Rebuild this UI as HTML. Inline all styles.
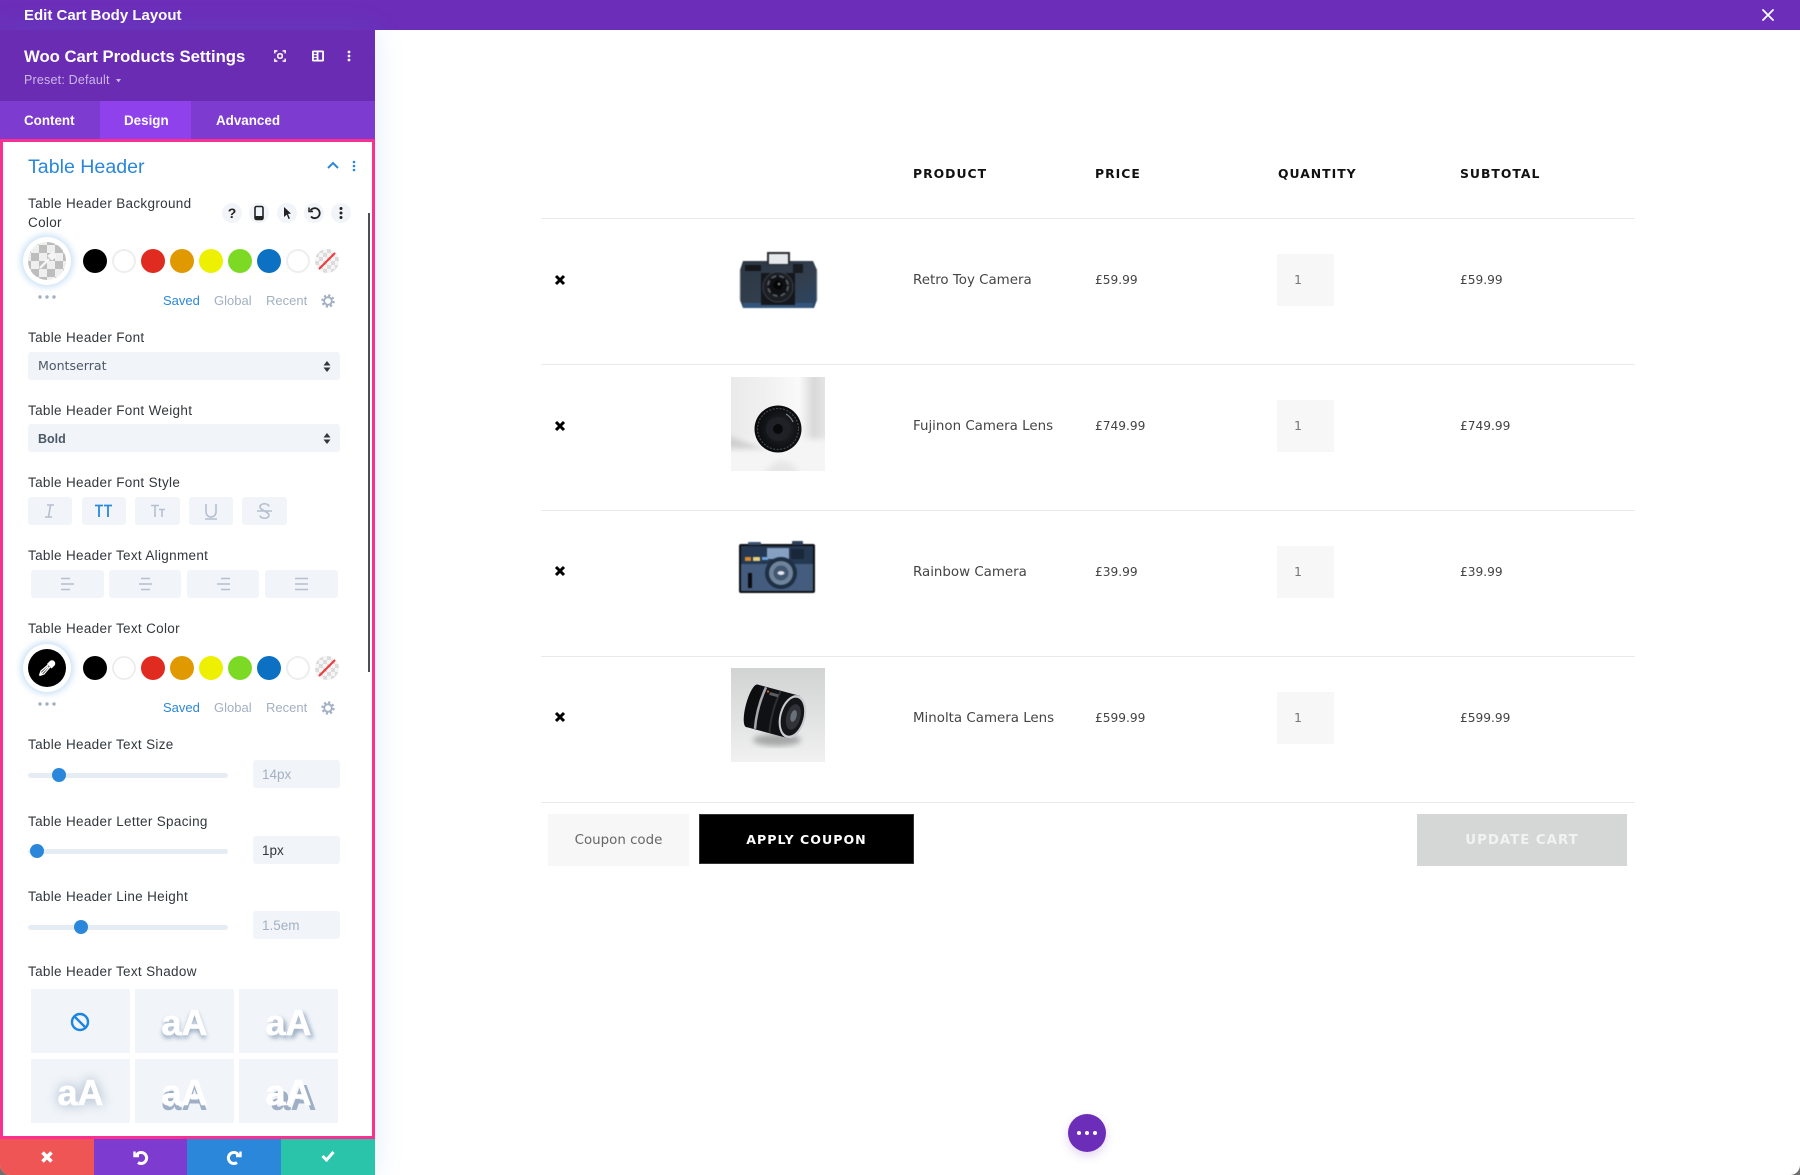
<!DOCTYPE html>
<html lang="en"><head><meta charset="utf-8"><title>Edit Cart Body Layout</title>
<style>
*{box-sizing:border-box;margin:0;padding:0}
html,body{width:1800px;height:1175px;overflow:hidden;background:#fff}
body{position:relative;font-family:"Liberation Sans",sans-serif;color:#32373c}
.a{position:absolute}
.t{position:absolute;white-space:nowrap;line-height:20px;height:20px}
.l{position:absolute;left:28px;white-space:nowrap;line-height:18px;height:18px;font-size:13.5px;letter-spacing:.32px;color:#32373c}
.box{position:absolute;background:#f1f5f9;border-radius:3px}
.sw{position:absolute;width:24px;height:24px;border-radius:50%}
.m{font-family:"DejaVu Sans",sans-serif}
.tab{position:absolute;top:111px;line-height:20px;font-size:13.4px;font-weight:700;color:#fff}
.c{position:absolute;width:20px;height:20px;border-radius:50%;background:#f1f5f9;top:203px}
.c svg{position:absolute;left:0;top:0}
.ln{position:absolute;left:541px;width:1094px;height:1px;background:#e9e9e9}
.h{position:absolute;top:164px;font-family:"DejaVu Sans",sans-serif;font-weight:700;font-size:12.4px;letter-spacing:1px;line-height:20px;color:#111}
.r{position:absolute;font-family:"DejaVu Sans",sans-serif;font-size:13.4px;line-height:20px;color:#444;white-space:nowrap}
.p{font-size:12.2px}
.q{position:absolute;left:1277px;width:57px;height:52px;background:#f7f7f7;color:#777;font-family:"DejaVu Sans",sans-serif;font-size:12.5px;line-height:52px;padding-left:17px}
.s{position:absolute;width:99px;height:64px;background:#f1f5f9;text-align:center;font-weight:700;font-size:36px;line-height:68px;color:#fff;-webkit-text-stroke:.6px #fff;overflow:hidden}
.tb{font-size:13px;line-height:20px;position:absolute}
.sl{position:absolute;left:28px;width:200px;height:5px;border-radius:3px;background:#e6ecf3}
.k{position:absolute;width:14px;height:14px;border-radius:50%;background:#2b87da}
.in{position:absolute;left:253px;width:87px;height:28px;background:#f1f5f9;border-radius:3px;font-size:13.5px;line-height:30px;padding-left:9px;color:#a3b0c2}
</style></head><body>

<!-- top bar -->
<div class="a" style="left:0;top:0;width:1800px;height:30px;background:#6c2eb9"></div>
<div class="t" style="left:24px;top:6px;font-size:15px;font-weight:700;color:#fff">Edit Cart Body Layout</div>
<svg class="a" style="left:1761px;top:8px" width="14" height="14" viewBox="0 0 14 14"><path d="M2 2L12 12M12 2L2 12" stroke="#fff" stroke-width="1.800" stroke-linecap="round"/></svg>

<!-- sidebar shadow and header -->
<div class="a" style="left:0;top:30px;width:375px;height:1145px;box-shadow:0 0 28px rgba(43,135,218,.14)"></div>
<div class="a" style="left:0;top:30px;width:375px;height:71px;background:#6a2cb3"></div>
<div class="t" style="left:24px;top:47px;font-size:16.700px;font-weight:700;color:#fff">Woo Cart Products Settings</div>
<div class="t" style="left:24px;top:70px;font-size:12.5px;color:#cdb7ea;letter-spacing:.2px">Preset: Default</div>
<svg class="a" style="left:116px;top:79px" width="5" height="4"><path d="M0 0H5L2.500 3.500Z" fill="#cdb7ea"/></svg>
<svg class="a" style="left:274px;top:50px" width="12" height="12" viewBox="0 0 14 14" fill="none" stroke="#fff" stroke-width="1.800"><path d="M1 4V1H4M10 1H13V4M13 10V13H10M4 13H1V10"/><rect x="4.500" y="4.500" width="5" height="5" rx="1.500"/></svg>
<svg class="a" style="left:312px;top:50px" width="12" height="12" viewBox="0 0 13 12"><path fill="#fff" fill-rule="evenodd" d="M1.500 0H11.500A1.500 1.500 0 0 1 13 1.500V10.500A1.500 1.500 0 0 1 11.500 12H1.500A1.500 1.500 0 0 1 0 10.500V1.500A1.500 1.500 0 0 1 1.500 0ZM2 2V4H5V2ZM2 5V7H5V5ZM2 8V10H5V8ZM7 2V10H11V2Z"/></svg>
<svg class="a" style="left:347px;top:50px" width="4" height="12"><circle cx="2" cy="2" r="1.400" fill="#fff"/><circle cx="2" cy="6" r="1.400" fill="#fff"/><circle cx="2" cy="10" r="1.400" fill="#fff"/></svg>

<!-- tabs -->
<div class="a" style="left:0;top:101px;width:375px;height:38px;background:#7d3bcf"></div>
<div class="a" style="left:100px;top:101px;width:91px;height:38px;background:#8f42ec"></div>
<div class="tab" style="left:24px">Content</div>
<div class="tab" style="left:124px">Design</div>
<div class="tab" style="left:216px">Advanced</div>

<!-- pink panel -->
<div class="a" style="left:0;top:139px;width:375px;height:1000px;background:#fff;border:3px solid #f9308f"></div>
<div class="a" style="left:368px;top:213px;width:2px;height:459px;background:#4a4f57"></div>

<div class="t" style="left:28px;top:157px;font-size:19.600px;color:#2b87da">Table Header</div>
<svg class="a" style="left:327px;top:161px" width="12" height="9"><path d="M1 7L6 2L11 7" fill="none" stroke="#2b87da" stroke-width="2"/></svg>
<svg class="a" style="left:352px;top:160px" width="4" height="12"><circle cx="2" cy="2" r="1.300" fill="#2b87da"/><circle cx="2" cy="6" r="1.300" fill="#2b87da"/><circle cx="2" cy="10" r="1.300" fill="#2b87da"/></svg>

<div class="l" style="top:195px">Table Header Background</div>
<div class="l" style="top:214px">Color</div>

<div class="c" style="left:222px"><span class="a" style="left:0;width:20px;text-align:center;font-size:14px;font-weight:700;line-height:20px;color:#222">?</span></div>
<div class="c" style="left:249px"><svg width="20" height="20"><rect x="6" y="3.500" width="8" height="13" rx="1.500" fill="none" stroke="#222" stroke-width="1.600"/><rect x="6" y="13" width="8" height="3.500" fill="#222"/></svg></div>
<div class="c" style="left:277px"><svg width="20" height="20"><path d="M7 4L14 10.500L11 11L13 15.500L11.500 16L9.800 11.600L7 14Z" fill="#222"/></svg></div>
<div class="c" style="left:304px"><svg width="20" height="20" fill="none" stroke="#222" stroke-width="1.800"><path d="M6.500 7.500A5 5 0 1 1 7 13.500"/><path d="M5 4.500V8.500H9" stroke-width="1.500"/></svg></div>
<div class="c" style="left:331px"><svg width="20" height="20"><circle cx="10" cy="5.500" r="1.500" fill="#222"/><circle cx="10" cy="10" r="1.500" fill="#222"/><circle cx="10" cy="14.500" r="1.500" fill="#222"/></svg></div>

<!-- color row 1 -->
<div class="a" style="left:28px;top:242px;width:38px;height:38px;border-radius:50%;background:repeating-conic-gradient(#bdbdbd 0 25%,#efefef 0 50%) 3px 3px/16px 16px;box-shadow:0 0 0 5px #fff,0 0 7px 7px rgba(43,135,218,.28)"></div>
<svg class="a" style="left:36px;top:250px" width="22" height="22" viewBox="0 0 22 22"><path d="M4 18L13 9M13 6L16 9M15 4.500A2 2 0 0 1 18 7.500L16 9L13 6Z" fill="#fff" stroke="#fff" stroke-width="2.400" opacity=".85"/></svg>
<div class="sw" style="left:83px;top:249px;background:#000"></div>
<div class="sw" style="left:112px;top:249px;background:#fff;border:2px solid #eee"></div>
<div class="sw" style="left:141px;top:249px;background:#e02b20"></div>
<div class="sw" style="left:170px;top:249px;background:#e09900"></div>
<div class="sw" style="left:199px;top:249px;background:#edf000"></div>
<div class="sw" style="left:228px;top:249px;background:#7cda24"></div>
<div class="sw" style="left:257px;top:249px;background:#0c71c3"></div>
<div class="sw" style="left:286px;top:249px;background:#fff;border:2px solid #eee"></div>
<div class="sw" style="left:315px;top:249px;overflow:hidden;background:repeating-conic-gradient(#dcdcdc 0 25%,#f5f5f5 0 50%) 0 0/8px 8px"><svg class="a" style="left:0;top:0" width="24" height="24"><path d="M4 20L20 4" stroke="#ef3b3b" stroke-width="2"/></svg></div>
<svg class="a" style="left:38px;top:295px" width="18" height="4"><circle cx="2" cy="2" r="1.700" fill="#a3b0c2"/><circle cx="9" cy="2" r="1.700" fill="#a3b0c2"/><circle cx="16" cy="2" r="1.700" fill="#a3b0c2"/></svg>
<div class="tb" style="left:163px;top:291px;color:#2b87da">Saved</div>
<div class="tb" style="left:214px;top:291px;color:#a3b0c2">Global</div>
<div class="tb" style="left:266px;top:291px;color:#a3b0c2">Recent</div>
<svg class="a" style="left:321px;top:294px" width="14" height="14" viewBox="0 0 14 14" fill="none" stroke="#a3b0c2"><circle cx="7" cy="7" r="3.800" stroke-width="1.800"/><circle cx="7" cy="7" r="5.500" stroke-width="2.400" stroke-dasharray="2.160 2.160"/></svg>

<!-- font -->
<div class="l" style="top:329px">Table Header Font</div>
<div class="box" style="left:28px;top:352px;width:312px;height:28px"></div>
<div class="t m" style="left:38px;top:356px;font-size:12.6px;color:#4c5866">Montserrat</div>
<svg class="a" style="left:323px;top:361px" width="8" height="11"><path d="M4 0L7.500 4.500H.5ZM4 11L.5 6.500H7.500Z" fill="#32373c"/></svg>
<div class="l" style="top:402px">Table Header Font Weight</div>
<div class="box" style="left:28px;top:424px;width:312px;height:28px"></div>
<div class="t" style="left:38px;top:429px;font-size:12.5px;font-weight:700;color:#4c5866">Bold</div>
<svg class="a" style="left:323px;top:433px" width="8" height="11"><path d="M4 0L7.500 4.500H.5ZM4 11L.5 6.500H7.500Z" fill="#32373c"/></svg>

<!-- style -->
<div class="l" style="top:474px">Table Header Font Style</div>
<div class="box" style="left:28px;top:497px;width:44px;height:28px"></div>
<div class="box" style="left:82px;top:497px;width:44px;height:28px"></div>
<div class="box" style="left:135px;top:497px;width:45px;height:28px"></div>
<div class="box" style="left:189px;top:497px;width:44px;height:28px"></div>
<div class="box" style="left:242px;top:497px;width:45px;height:28px"></div>
<svg class="a" style="left:28px;top:497px" width="260" height="28" fill="none" stroke="#b6bfcf" stroke-width="1.600">
<path d="M19 8H26M17 20H24M22.500 8L20.500 20"/>
<path d="M67 8.500H75M71 8.500V20M76 8.500H84M80 8.500V20" stroke="#2b87da" stroke-width="1.800"/>
<path d="M123 8.500H131M127 8.500V20M131 12.500H137M134 12.500V20"/>
<path d="M178 7V15A5 5 0 0 0 188 15V7M177 22H189"/>
<path d="M241 9.500A4.500 3 0 0 0 232 10C232 13 241 15 241 18A4.500 3 0 0 1 232 18.500M229 14H244"/>
</svg>

<!-- alignment -->
<div class="l" style="top:547px">Table Header Text Alignment</div>
<div class="box" style="left:31px;top:570px;width:73px;height:28px"></div>
<div class="box" style="left:109px;top:570px;width:72px;height:28px"></div>
<div class="box" style="left:187px;top:570px;width:72px;height:28px"></div>
<div class="box" style="left:265px;top:570px;width:73px;height:28px"></div>
<svg class="a" style="left:31px;top:570px" width="307" height="28" stroke="#b6bfcf" stroke-width="1.500">
<path d="M30 8.500H39M30 14H43M30 19.500H39"/>
<path d="M110 8.500H119M108 14H121M110 19.500H119"/>
<path d="M190 8.500H199M186 14H199M190 19.500H199"/>
<path d="M264 8.500H277M264 14H277M264 19.500H277"/>
</svg>

<!-- text color -->
<div class="l" style="top:620px">Table Header Text Color</div>
<div class="a" style="left:28px;top:649px;width:38px;height:38px;border-radius:50%;background:#000;box-shadow:0 0 0 5px #fff,0 0 7px 7px rgba(43,135,218,.28)"></div>
<svg class="a" style="left:36px;top:657px" width="22" height="22" viewBox="0 0 22 22"><path d="M4.500 17.500L12.500 9.500M14.500 4.500A2.500 2.500 0 0 1 18 8L15.500 10.500L12 7Z" fill="#fff" stroke="#fff" stroke-width="1.500"/><path d="M3.500 18.500L5 14L12 8M3.500 18.500L8 17L14 10" fill="none" stroke="#fff" stroke-width="1.300"/></svg>
<div class="sw" style="left:83px;top:656px;background:#000"></div>
<div class="sw" style="left:112px;top:656px;background:#fff;border:2px solid #eee"></div>
<div class="sw" style="left:141px;top:656px;background:#e02b20"></div>
<div class="sw" style="left:170px;top:656px;background:#e09900"></div>
<div class="sw" style="left:199px;top:656px;background:#edf000"></div>
<div class="sw" style="left:228px;top:656px;background:#7cda24"></div>
<div class="sw" style="left:257px;top:656px;background:#0c71c3"></div>
<div class="sw" style="left:286px;top:656px;background:#fff;border:2px solid #eee"></div>
<div class="sw" style="left:315px;top:656px;overflow:hidden;background:repeating-conic-gradient(#dcdcdc 0 25%,#f5f5f5 0 50%) 0 0/8px 8px"><svg class="a" style="left:0;top:0" width="24" height="24"><path d="M4 20L20 4" stroke="#ef3b3b" stroke-width="2"/></svg></div>
<svg class="a" style="left:38px;top:702px" width="18" height="4"><circle cx="2" cy="2" r="1.700" fill="#a3b0c2"/><circle cx="9" cy="2" r="1.700" fill="#a3b0c2"/><circle cx="16" cy="2" r="1.700" fill="#a3b0c2"/></svg>
<div class="tb" style="left:163px;top:698px;color:#2b87da">Saved</div>
<div class="tb" style="left:214px;top:698px;color:#a3b0c2">Global</div>
<div class="tb" style="left:266px;top:698px;color:#a3b0c2">Recent</div>
<svg class="a" style="left:321px;top:701px" width="14" height="14" viewBox="0 0 14 14" fill="none" stroke="#a3b0c2"><circle cx="7" cy="7" r="3.800" stroke-width="1.800"/><circle cx="7" cy="7" r="5.500" stroke-width="2.400" stroke-dasharray="2.160 2.160"/></svg>

<!-- sliders -->
<div class="l" style="top:736px">Table Header Text Size</div>
<div class="sl" style="top:773px"></div><div class="k" style="left:52px;top:768px"></div>
<div class="in" style="top:760px">14px</div>
<div class="l" style="top:813px">Table Header Letter Spacing</div>
<div class="sl" style="top:849px"></div><div class="k" style="left:30px;top:844px"></div>
<div class="in" style="top:836px;color:#32373c">1px</div>
<div class="l" style="top:888px">Table Header Line Height</div>
<div class="sl" style="top:925px"></div><div class="k" style="left:74px;top:920px"></div>
<div class="in" style="top:911px">1.5em</div>

<!-- shadows -->
<div class="l" style="top:963px">Table Header Text Shadow</div>
<div class="s" style="left:31px;top:989px"></div>
<svg class="a" style="left:70px;top:1012px" width="20" height="20" fill="none" stroke="#1d85dd" stroke-width="2.400"><circle cx="10" cy="10" r="8"/><path d="M4.500 4.500L15.500 15.500"/></svg>
<div class="s" style="left:135px;top:989px;text-shadow:0 3px 5px #8fa2bb">aA</div>
<div class="s" style="left:239px;top:989px;text-shadow:3px 3px 5px #8fa2bb">aA</div>
<div class="s" style="left:31px;top:1059px;text-shadow:0 0 12px #8fa2bb">aA</div>
<div class="s" style="left:135px;top:1059px;text-shadow:0 5px 0 #9fb0c6">aA</div>
<div class="s" style="left:239px;top:1059px;text-shadow:5px 5px 0 #9fb0c6">aA</div>

<!-- bottom buttons -->
<div class="a" style="left:0;top:1139px;width:94px;height:36px;background:#ef5555;border-bottom-left-radius:10px"></div>
<div class="a" style="left:94px;top:1139px;width:93px;height:36px;background:#7e3bd0"></div>
<div class="a" style="left:187px;top:1139px;width:94px;height:36px;background:#2b87da"></div>
<div class="a" style="left:281px;top:1139px;width:94px;height:36px;background:#29c4a9"></div>
<svg class="a" style="left:40px;top:1150px" width="14" height="14"><path d="M2.500 2.500L11.500 11.500M11.500 2.500L2.500 11.500" stroke="#fff" stroke-width="3.600"/></svg>
<svg class="a" style="left:133px;top:1149px" width="16" height="16" fill="none" stroke="#fff" stroke-width="3"><path d="M3.500 6A5.500 5.500 0 1 1 5 13.500"/><path d="M1.500 2.500V7H6" stroke-width="2.400"/></svg>
<svg class="a" style="left:226px;top:1149px" width="16" height="16" fill="none" stroke="#fff" stroke-width="3"><path d="M12.500 6A5.500 5.500 0 1 0 11 13.500"/><path d="M14.500 2.500V7H10" stroke-width="2.400"/></svg>
<svg class="a" style="left:321px;top:1150px" width="14" height="12"><path d="M1.500 6L5.500 10L12.500 2" fill="none" stroke="#fff" stroke-width="3"/></svg>

<!-- table -->
<div class="h" style="left:913px">PRODUCT</div>
<div class="h" style="left:1095px">PRICE</div>
<div class="h" style="left:1278px">QUANTITY</div>
<div class="h" style="left:1460px">SUBTOTAL</div>
<div class="ln" style="top:218px"></div>
<div class="ln" style="top:364px"></div>
<div class="ln" style="top:510px"></div>
<div class="ln" style="top:656px"></div>
<div class="ln" style="top:802px"></div>

<svg class="a" style="left:554px;top:274px" width="12" height="12"><path d="M2 2L10 10M10 2L2 10" stroke="#000" stroke-width="3"/></svg>
<svg class="a" style="left:554px;top:420px" width="12" height="12"><path d="M2 2L10 10M10 2L2 10" stroke="#000" stroke-width="3"/></svg>
<svg class="a" style="left:554px;top:565px" width="12" height="12"><path d="M2 2L10 10M10 2L2 10" stroke="#000" stroke-width="3"/></svg>
<svg class="a" style="left:554px;top:711px" width="12" height="12"><path d="M2 2L10 10M10 2L2 10" stroke="#000" stroke-width="3"/></svg>

<div class="r" style="left:913px;top:271px">Retro Toy Camera</div>
<div class="r p" style="left:1095px;top:270px">£59.99</div>
<div class="q" style="top:254px">1</div>
<div class="r p" style="left:1460px;top:270px">£59.99</div>
<div class="r" style="left:913px;top:417px">Fujinon Camera Lens</div>
<div class="r p" style="left:1095px;top:416px">£749.99</div>
<div class="q" style="top:400px">1</div>
<div class="r p" style="left:1460px;top:416px">£749.99</div>
<div class="r" style="left:913px;top:563px">Rainbow Camera</div>
<div class="r p" style="left:1095px;top:562px">£39.99</div>
<div class="q" style="top:546px">1</div>
<div class="r p" style="left:1460px;top:562px">£39.99</div>
<div class="r" style="left:913px;top:709px">Minolta Camera Lens</div>
<div class="r p" style="left:1095px;top:708px">£599.99</div>
<div class="q" style="top:692px">1</div>
<div class="r p" style="left:1460px;top:708px">£599.99</div>

<!-- camera 1 -->
<svg class="a" style="left:731px;top:240px;filter:blur(.5px)" width="94" height="80" viewBox="0 0 94 80">
<defs><linearGradient id="b1" x1="0" x2="1" y1="0" y2="1"><stop offset="0" stop-color="#2c3744"/><stop offset=".6" stop-color="#333f4e"/><stop offset="1" stop-color="#2a4666"/></linearGradient></defs>
<path d="M12 21H82L86 30V60L83 68H12L9 60V30Z" fill="url(#b1)"/>
<path d="M9 30V60M86 30V60" stroke="#a8afb6" stroke-width="1"/>
<rect x="12" y="63" width="70" height="5" fill="#34567c"/>
<rect x="36" y="12" width="23" height="13" fill="#2a2d32"/>
<rect x="38" y="14" width="19" height="10" fill="#e6e9ea"/>
<rect x="14" y="25" width="16" height="6" fill="#15171b"/>
<rect x="62" y="24" width="10" height="9" fill="#181b20"/>
<rect x="30" y="33" width="34" height="32" fill="#14171c"/>
<circle cx="47" cy="47" r="15" fill="#1b1e23" stroke="#3b4047"/>
<circle cx="47" cy="46" r="10" fill="#0e1013" stroke="#555b62" stroke-width="2" stroke-dasharray="5 3"/>
<circle cx="47" cy="45" r="4.500" fill="#050505"/>
<circle cx="48" cy="44" r="1.300" fill="#7a8490"/>
</svg>

<!-- lens 1 -->
<svg class="a" style="left:731px;top:377px" width="94" height="94" viewBox="0 0 94 94">
<defs>
<linearGradient id="g1" x1="0" x2="1" y1="0" y2="0"><stop offset="0" stop-color="#eaeaea"/><stop offset=".4" stop-color="#f1f1f1"/><stop offset=".72" stop-color="#fafafa"/><stop offset=".88" stop-color="#d9d9d9"/><stop offset="1" stop-color="#e4e4e4"/></linearGradient>
<linearGradient id="g2" x1="0" x2="0" y1="0" y2="1"><stop offset="0" stop-color="#d2d3d3"/><stop offset=".5" stop-color="#e0e1e1"/><stop offset="1" stop-color="#f1f1f1"/></linearGradient>
<radialGradient id="g3" cx=".55" cy=".5" r=".55"><stop offset="0" stop-color="#31363c"/><stop offset=".5" stop-color="#16181b"/><stop offset="1" stop-color="#08080a"/></radialGradient>
<filter id="f3" x="-20%" y="-20%" width="140%" height="140%"><feGaussianBlur stdDeviation="3"/></filter>
<clipPath id="c1"><rect width="94" height="94"/></clipPath>
<clipPath id="c2"><rect width="94" height="94"/></clipPath>
</defs>
<g clip-path="url(#c1)">
<rect width="94" height="94" fill="url(#g1)"/>
<g filter="url(#f3)">
<rect x="-6" y="62" width="106" height="40" fill="#f5f5f5"/>
<path d="M-6 58L36 72L-6 72Z" fill="#cfcfcf"/>
<path d="M30 100Q42 82 54 84Q64 86 70 100Z" fill="#e6e6e6"/>
</g>
</g>
<circle cx="47" cy="52" r="23.500" fill="url(#g3)"/>
<circle cx="47" cy="52" r="20.500" fill="none" stroke="#43484e" stroke-width="1.200" stroke-dasharray="2 1.500"/>
<circle cx="47" cy="52" r="12" fill="#1e2227"/>
<circle cx="47" cy="52" r="5" fill="#08090a"/>
<path d="M55 37A17 17 0 0 1 62 45" stroke="#7d8791" stroke-width="1.200" fill="none"/>
</svg>

<!-- camera 2 -->
<svg class="a" style="left:731px;top:535px;filter:blur(.4px)" width="94" height="66" viewBox="0 0 94 66">
<rect x="8" y="9" width="76" height="49" rx="2" fill="#0d1014"/>
<rect x="10" y="11" width="72" height="18" fill="#243852"/>
<rect x="10" y="29" width="72" height="27" fill="#445c7e"/>
<rect x="17" y="7" width="13" height="3" rx="1" fill="#3a5170"/>
<rect x="61" y="6" width="11" height="4" rx="1" fill="#2c3f58"/>
<rect x="36" y="13" width="22" height="11" fill="#86a0c2"/>
<rect x="60" y="14" width="13" height="10" fill="#1a2738"/>
<rect x="14" y="22" width="6" height="4" fill="#d88a2b"/>
<rect x="22" y="22" width="7" height="4" fill="#e8cf7a"/>
<rect x="31" y="22" width="6" height="3" fill="#6aa3dd"/>
<rect x="17" y="38" width="4" height="15" fill="#0c0e11"/>
<circle cx="50" cy="38" r="16" fill="#1f2f44"/>
<circle cx="50" cy="38" r="12" fill="#6f849b"/>
<circle cx="50" cy="38" r="7.500" fill="#435870"/>
<ellipse cx="50" cy="38" rx="3.500" ry="2" fill="#e4eaef"/>
</svg>

<!-- lens 2 -->
<svg class="a" style="left:731px;top:668px" width="94" height="94" viewBox="0 0 94 94">
<rect width="94" height="94" fill="url(#g2)"/>
<g clip-path="url(#c2)"><ellipse cx="46" cy="72" rx="24" ry="6" fill="#8e9090" filter="url(#f3)" opacity=".75"/></g>
<g transform="rotate(15 44 44)">
<rect x="20" y="22" width="44" height="44" fill="#101114"/>
<ellipse cx="20" cy="44" rx="6" ry="22" fill="#0c0d0f"/>
<path d="M29 22.500Q25 44 29 65.500" stroke="#a6aaae" stroke-width="2.500" fill="none"/>
<path d="M44 22.500Q40 44 44 65.500" stroke="#2c2f33" stroke-width="2" fill="none"/>
<rect x="34" y="26" width="9" height="3" fill="#5a5d61"/>
<circle cx="32" cy="26" r="1.100" fill="#d8622a"/>
<ellipse cx="62" cy="44" rx="13" ry="22" fill="#c9ccd0"/>
<ellipse cx="62" cy="44" rx="11" ry="19.500" fill="#141619"/>
<ellipse cx="63" cy="44" rx="7" ry="13" fill="#2f3338"/>
<ellipse cx="63" cy="43" rx="3" ry="6" fill="#6a7078"/>
</g>
</svg>

<!-- coupon row -->
<div class="a m" style="left:548px;top:814px;width:141px;height:52px;background:#f7f7f7;text-align:center;line-height:54px;font-size:13.4px;color:#666">Coupon code</div>
<div class="a m" style="left:699px;top:814px;width:215px;height:50px;background:#000;border:1px solid #333;text-align:center;line-height:49px;font-size:12.6px;font-weight:700;letter-spacing:1px;color:#fff">APPLY COUPON</div>
<div class="a m" style="left:1417px;top:814px;width:210px;height:52px;background:#d5d7d6;text-align:center;line-height:54px;font-size:13.3px;font-weight:700;letter-spacing:1px;color:#f1f2f2">UPDATE CART</div>

<!-- round button -->
<div class="a" style="left:1068px;top:1114px;width:38px;height:38px;border-radius:50%;background:#6c2eb9;box-shadow:0 4px 10px rgba(108,46,185,.2)"></div>
<svg class="a" style="left:1076px;top:1130px" width="22" height="6"><circle cx="3" cy="3" r="2" fill="#fff"/><circle cx="11" cy="3" r="2" fill="#fff"/><circle cx="19" cy="3" r="2" fill="#fff"/></svg>

<!-- window corners -->
<svg class="a" style="left:1790px;top:1165px" width="10" height="10"><path d="M10 0V10H0A10 10 0 0 0 10 0Z" fill="#6f6f6f"/></svg>
<svg class="a" style="left:0;top:1165px" width="10" height="10"><path d="M0 0V10H10A10 10 0 0 1 0 0Z" fill="#6f6f6f"/></svg>
</body></html>
